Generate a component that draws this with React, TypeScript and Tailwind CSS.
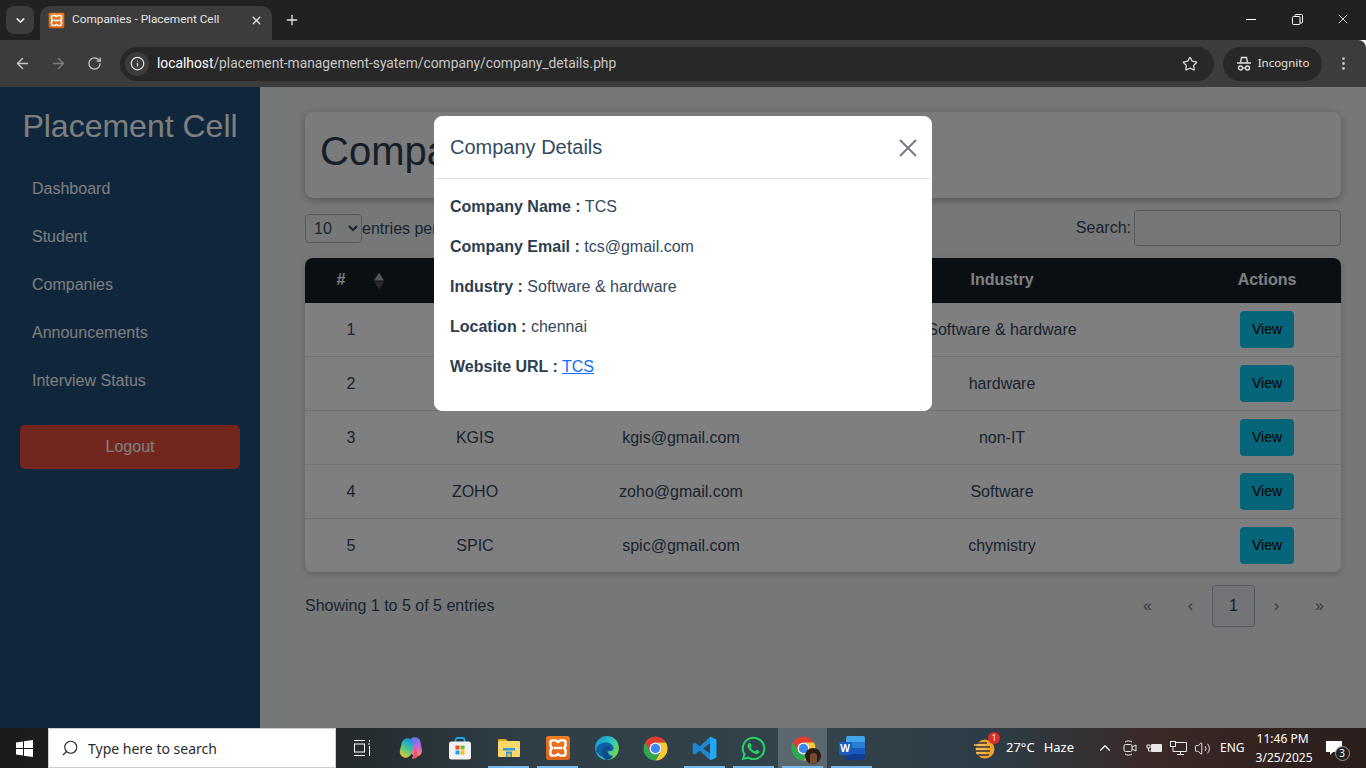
import { ArrowLeft, ArrowRight, ChevronDown, ChevronUp, EllipsisVertical, Info, Plus, RotateCw, Search, Star, Volume2, X } from 'lucide-react'
import { FaWhatsapp } from 'react-icons/fa'

const navItems = ['Dashboard', 'Student', 'Companies', 'Announcements', 'Interview Status']

// name and email of the first two rows sit behind the modal
const companies = [
  { id: 1, name: '', email: '', industry: 'Software & hardware' },
  { id: 2, name: '', email: '', industry: 'hardware' },
  { id: 3, name: 'KGIS', email: 'kgis@gmail.com', industry: 'non-IT' },
  { id: 4, name: 'ZOHO', email: 'zoho@gmail.com', industry: 'Software' },
  { id: 5, name: 'SPIC', email: 'spic@gmail.com', industry: 'chymistry' },
]

const details = [
  { label: 'Company Name :', value: 'TCS' },
  { label: 'Company Email :', value: 'tcs@gmail.com' },
  { label: 'Industry :', value: 'Software & hardware' },
  { label: 'Location :', value: 'chennai' },
]

function XamppLogo({ size, id }: { size: number; id: string }) {
  return (
    <svg width={size} height={size} viewBox="0 0 24 24">
      <defs>
        <linearGradient id={id} x1="0" y1="0" x2="0" y2="1">
          <stop offset="0" stopColor="#ee7d22" />
          <stop offset="1" stopColor="#d9651a" />
        </linearGradient>
      </defs>
      <rect x="1" y="1" width="22" height="22" rx="2.500" fill={`url(#${id})`} />
      <path d="M7 5h3l2 1.500L14 5h3a2 2 0 0 1 2 2v3l-1.500 2 1.500 2v3a2 2 0 0 1-2 2h-3l-2-1.500L10 19H7a2 2 0 0 1-2-2v-3l1.500-2L5 10V7a2 2 0 0 1 2-2Z" fill="none" stroke="#fff" strokeWidth="2.200" />
      <path d="M8 12h8" stroke="#fff" strokeWidth="2.200" />
    </svg>
  )
}

function ChromeLogo() {
  return (
    <svg width="29" height="29" viewBox="0 0 24 24">
      <path d="M3.340 7A10 10 0 0 1 20.660 7L12 7A5 5 0 0 0 7.670 14.500Z" fill="#e33b2e" />
      <path d="M20.660 7A10 10 0 0 1 12 22L16.330 14.500A5 5 0 0 0 12 7Z" fill="#fcc934" />
      <path d="M12 22A10 10 0 0 1 3.340 7L7.670 14.500A5 5 0 0 0 16.330 14.500Z" fill="#2fa84f" />
      <circle cx="12" cy="12" r="5" fill="#fff" />
      <circle cx="12" cy="12" r="3.900" fill="#4285f4" />
    </svg>
  )
}

function EdgeLogo() {
  return (
    <svg width="26" height="26" viewBox="0 0 24 24">
      <defs>
        <linearGradient id="edgeTop" x1="0" y1="0" x2="1" y2="0.6">
          <stop offset="0" stopColor="#1590d8" />
          <stop offset="0.6" stopColor="#2cc3c0" />
          <stop offset="1" stopColor="#6fd84f" />
        </linearGradient>
      </defs>
      <circle cx="12" cy="12" r="11" fill="url(#edgeTop)" />
      <path d="M2 15C2 9 7 7 11 7c4 0 7 2.500 7 5.500 0 1.500-1.500 2.500-4 2.500-1 0-1.500-.5-1.500-.5 0 3 3 5 6 4.500A11 11 0 0 1 2 15Z" fill="#0f5fa8" />
      <path d="M7.500 15.500c0-3 2-5 5-5 2 0 3 1 3 2 0 1-1 1.500-3 1.500-.5 3 1.500 6 5 6A11 11 0 0 1 12 23c-3 0-4.500-4-4.500-7.500Z" fill="#114a8b" />
    </svg>
  )
}

function VsCodeLogo() {
  return (
    <svg width="27" height="27" viewBox="0 0 24 24">
      <path d="M17 1.500 22.500 4V20L17 22.500 7.800 14 3.500 17.300 1.500 16.200V7.800L3.500 6.700 7.800 10ZM17 7.300 10.800 12 17 16.700Z" fill="#1f86d0" fillRule="evenodd" />
      <path d="M17 1.500 22.500 4V20L17 22.500Z" fill="#23a9f2" />
    </svg>
  )
}

function CopilotLogo() {
  return (
    <svg width="26" height="26" viewBox="0 0 24 24">
      <defs>
        <linearGradient id="copA" x1="0.5" y1="0" x2="0.3" y2="1">
          <stop offset="0" stopColor="#1f8fe8" />
          <stop offset="0.5" stopColor="#3ec98a" />
          <stop offset="1" stopColor="#f5c72d" />
        </linearGradient>
        <linearGradient id="copB" x1="0.5" y1="0" x2="0.5" y2="1">
          <stop offset="0" stopColor="#5a7cf0" />
          <stop offset="0.5" stopColor="#c565dc" />
          <stop offset="1" stopColor="#f98a5a" />
        </linearGradient>
      </defs>
      <rect x="11" y="2" width="10.500" height="18" rx="5.200" transform="rotate(-10 16 11)" fill="url(#copB)" />
      <rect x="2.500" y="3" width="11" height="18" rx="5.400" transform="rotate(14 8 12)" fill="url(#copA)" />
      <path d="M14.500 9c1.500 3 1 8-1.500 12-1 1.500 3 1 4.500-.5 1.500-2 .5-6-3-11.500Z" fill="#f0556f" />
    </svg>
  )
}

function StoreLogo() {
  return (
    <svg width="24" height="24" viewBox="0 0 24 24">
      <path d="M7.500 6V4a2 2 0 0 1 2-2h5a2 2 0 0 1 2 2v2" fill="none" stroke="#1fa3e8" strokeWidth="1.800" />
      <rect x="1" y="5.500" width="22" height="18" rx="2.500" fill="#f2f2f2" />
      <rect x="7.500" y="9.500" width="4" height="4" fill="#e8502a" />
      <rect x="12.500" y="9.500" width="4" height="4" fill="#7cb82c" />
      <rect x="7.500" y="14.500" width="4" height="4" fill="#1fa3e8" />
      <rect x="12.500" y="14.500" width="4" height="4" fill="#fbbb1b" />
    </svg>
  )
}

function FolderLogo() {
  return (
    <svg width="24" height="24" viewBox="0 0 24 24">
      <path d="M1 3h8l2 2.500H1Z" fill="#dba21e" />
      <rect x="1" y="5" width="22" height="16" rx="1" fill="#fcd86b" />
      <path d="M9 21v-5.500h6V21h-2v-3h-2v3Z" fill="#2e9be0" />
      <rect x="6" y="12" width="12" height="2.500" fill="#2e9be0" />
      <rect x="10.500" y="17.500" width="3" height="3.500" fill="#f4b63c" />
    </svg>
  )
}

function WordLogo() {
  return (
    <div className="relative h-[24px] w-[26px]">
      <div className="absolute right-0 top-0 h-[24px] w-[19px] overflow-hidden rounded-[2px]">
        <div className="h-[6px] bg-[#41a5ee]" />
        <div className="h-[6px] bg-[#2b7cd3]" />
        <div className="h-[6px] bg-[#185abd]" />
        <div className="h-[6px] bg-[#103f91]" />
      </div>
      <span className="absolute left-0 top-[6px] flex h-[13px] w-[13px] items-center justify-center rounded-[1px] bg-[#185abd] text-[10px] font-bold text-white">W</span>
    </div>
  )
}

function IncognitoIcon() {
  return (
    <svg width="16" height="16" viewBox="0 0 16 16" fill="none" stroke="#e3e3e3" strokeWidth="1.300">
      <path d="M4.500 6.500 5.500 1.500h5l1 5" />
      <path d="M1 7h14" strokeWidth="1.500" />
      <circle cx="4.500" cy="12" r="2" />
      <circle cx="11.500" cy="12" r="2" />
      <path d="M6.500 12h3" />
    </svg>
  )
}

function WeatherIcon() {
  return (
    <div className="relative h-[26px] w-[26px]">
      <svg width="26" height="26" viewBox="0 0 26 26">
        <circle cx="13" cy="14" r="9.500" fill="#f4a12c" />
        <path d="M1 8h14M3 12h15M1 16h17M6 20h11" stroke="#2e3b40" strokeWidth="1.500" />
        <path d="M2 10h12M4 14h11M4 18h10" stroke="#f6c05b" strokeWidth="1.500" />
      </svg>
      <span className="absolute right-[-2px] top-[-3px] flex h-[12px] w-[12px] items-center justify-center rounded-full bg-[#d92b2b] text-[8px] text-white">1</span>
    </div>
  )
}

function SortCarets() {
  return (
    <span className="absolute left-[69px] top-1/2 flex -translate-y-1/2 flex-col gap-[1px]">
      <span className="h-0 w-0 border-x-[5px] border-b-[8px] border-x-transparent border-b-[#a8acb0]" />
      <span className="h-0 w-0 border-x-[5px] border-t-[8px] border-x-transparent border-t-[#4c5054]" />
    </span>
  )
}

function TaskButton({ children, running, active }: { children: React.ReactNode; running?: boolean; active?: boolean }) {
  return (
    <div className={`relative flex h-full w-[49px] shrink-0 items-center justify-center ${active ? 'bg-white/20' : ''}`}>
      {children}
      {running && <span className="absolute bottom-0 left-[4px] right-[4px] h-[2px] bg-[#76b9ed]" />}
    </div>
  )
}

function BrowserChrome() {
  return (
    <header className="shrink-0 font-['Noto_Sans',sans-serif]">
      <div className="flex h-[40px] items-end bg-[#202221] pl-[6px]">
        <button className="mb-[6px] flex h-[28px] w-[28px] items-center justify-center rounded-lg bg-[#3c3c3c] text-[#e3e3e3]">
          <ChevronDown size={13} strokeWidth={3} />
        </button>
        <div className="ml-[6px] flex h-[34px] w-[232px] items-center rounded-t-[10px] bg-[#3c3c3c] pb-[6px] pl-[8px] pr-[9px]">
          <XamppLogo size={17} id="xamppTab" />
          <span className="ml-[7px] flex-1 font-['Roboto',sans-serif] text-[11.800px] text-[#e3e3e3]">Companies - Placement Cell</span>
          <X size={13} strokeWidth={2.5} className="text-[#e3e3e3]" />
        </div>
        <Plus size={16} strokeWidth={2} className="mb-[12px] ml-[12px] text-[#e3e3e3]" />
        <div className="mb-[13px] ml-auto flex items-center text-white">
          <span className="flex w-[46px] justify-center"><span className="h-px w-[10px] bg-white" /></span>
          <span className="flex w-[46px] justify-center">
            <svg width="11" height="11" viewBox="0 0 11 11" fill="none" stroke="#fff"><rect x="0.500" y="2.500" width="7.500" height="8" rx="1" /><path d="M3 2.500V1.500a1 1 0 0 1 1-1h5.500a1 1 0 0 1 1 1V8a1 1 0 0 1-1 1H8" /></svg>
          </span>
          <span className="flex w-[46px] justify-center"><X size={16} strokeWidth={1.2} /></span>
        </div>
      </div>
      <div className="flex h-[47px] items-center rounded-tr-lg bg-[#3c3c3c] pl-[14px] pr-[12px]">
        <ArrowLeft size={17} className="text-[#c7c7c7]" />
        <ArrowRight size={17} className="ml-[19px] text-[#7d7d7d]" />
        <RotateCw size={15} className="ml-[20px] text-[#c7c7c7]" />
        <div className="ml-[18px] flex h-[34px] w-[1094px] items-center rounded-full bg-[#282828] pl-[5px] pr-[16px]">
          <span className="flex h-[24px] w-[24px] items-center justify-center rounded-full bg-[#3c3c3c]">
            <Info size={15} className="text-[#e3e3e3]" />
          </span>
          <span className="ml-[8px] flex-1 font-['Roboto',sans-serif] text-[13.800px] text-[#c7c7c7]"><span className="text-white">localhost</span>/placement-management-syatem/company/company_details.php</span>
          <Star size={16} className="text-[#d0d0d0]" />
        </div>
        <div className="ml-[9px] flex h-[34px] w-[99px] items-center justify-center gap-[6px] rounded-full bg-[#282828]">
          <IncognitoIcon />
          <span className="pb-[2px] text-[11.500px] text-[#e3e3e3]">Incognito</span>
        </div>
        <EllipsisVertical size={17} className="ml-[13px] text-[#c7c7c7]" />
      </div>
    </header>
  )
}

function Sidebar() {
  return (
    <aside className="flex w-[260px] shrink-0 flex-col bg-[#1e4c78] px-[20px] pt-[20px]">
      <h1 className="mb-[20px] whitespace-nowrap text-center text-[32px] leading-[38px] text-white">Placement Cell</h1>
      <nav className="flex flex-col">
        {navItems.map((item) => (
          <a key={item} className="flex h-[48px] items-center pl-[12px] text-[16px] text-[#fafafa]">{item}</a>
        ))}
      </nav>
      <button className="mt-[20px] h-[44px] w-[220px] rounded-[5px] bg-[#e74c3c] text-[16px] text-white">Logout</button>
    </aside>
  )
}

function CompanyTable() {
  return (
    <div className="overflow-hidden rounded-lg shadow-[0_2px_6px_rgba(0,0,0,0.2)]">
      <table className="w-[1036px] table-fixed border-separate border-spacing-0 text-center text-[16px]">
        <thead>
          <tr className="h-[45px] bg-[#141e28] font-bold text-white">
            <th className="relative w-[92px] pb-[2px] pr-[20px]">#<SortCarets /></th>
            <th className="w-[156px]" />
            <th className="w-[256px]" />
            <th className="w-[386px] pb-[2px]">Industry</th>
            <th className="w-[146px] pb-[2px] pr-[2px]">Actions</th>
          </tr>
        </thead>
        <tbody className="bg-white text-[#34495e]">
          {companies.map((company) => (
            <tr key={company.id} className="h-[54px] last:h-[53px] [&>td]:border-b [&>td]:border-[#dee2e6] last:[&>td]:border-b-0">
              <td>{company.id}</td>
              <td>{company.name}</td>
              <td>{company.email}</td>
              <td>{company.industry}</td>
              <td className="pr-[2px]">
                <button className="h-[37px] w-[54px] rounded-[4px] bg-[#0dcaf0] text-[14px] text-black">View</button>
              </td>
            </tr>
          ))}
        </tbody>
      </table>
    </div>
  )
}

function Pagination() {
  return (
    <div className="flex items-center text-[#6c757d]">
      <span className="w-[43px] text-center text-[16px]">«</span>
      <span className="w-[43px] text-center text-[16px]">‹</span>
      <span className="flex h-[42px] w-[43px] items-center justify-center rounded-[3px] border border-[#adb5bd] bg-[#e6e9ee] text-[16px] text-[#2c3e50]">1</span>
      <span className="w-[43px] text-center text-[16px]">›</span>
      <span className="w-[43px] text-center text-[16px]">»</span>
    </div>
  )
}

function CompanyModal() {
  return (
    <div className="absolute left-[434px] top-[29px] w-[498px] rounded-lg border border-white bg-white text-[16px] text-[#34495e]">
      <div className="flex h-[62px] items-center justify-between border-b border-[#dee2e6] pb-[2px] pl-[15px] pr-[8px]">
        <h2 className="text-[20px]">Company Details</h2>
        <X size={30} strokeWidth={1.5} className="mt-[2px] text-[#777a7c]" />
      </div>
      <div className="px-[15px] pt-[16px] pb-[15px]">
        {details.map((row) => (
          <p key={row.label} className="mb-[16px] leading-[24px]">
            <strong className="text-[#2c3e50]">{row.label}</strong> {row.value}
          </p>
        ))}
        <p className="mb-[16px] leading-[24px]">
          <strong className="text-[#2c3e50]">Website URL :</strong> <a className="text-[#0d6efd] underline">TCS</a>
        </p>
      </div>
    </div>
  )
}

function Taskbar() {
  return (
    <footer className="flex h-[40px] shrink-0 items-center bg-[linear-gradient(90deg,#1c1b1a_0%,#1f2224_20%,#2f3e46_38%,#33434b_60%,#2d3d47_72%,#3a2a28_84%,#2a1d1a_100%)] font-['Noto_Sans',sans-serif] text-white">
      <div className="flex h-full w-[48px] items-center justify-center">
        <svg width="17" height="17" viewBox="0 0 17 17" fill="#fff">
          <path d="M0 2.400 7 1.400V8H0ZM8 1.300 17 0V8H8ZM0 9H7V15.600L0 14.600ZM8 9H17V17L8 15.700Z" />
        </svg>
      </div>
      <div className="flex h-full w-[288px] items-center border border-[#cfcfcf] bg-white pl-[12px] text-[#2b2b2b]">
        <Search size={18} strokeWidth={1.5} className="-scale-x-100" />
        <span className="ml-[9px] text-[14px]">Type here to search</span>
      </div>
      <div className="ml-[1px] flex h-full items-center">
        <TaskButton>
          <svg width="16" height="16" viewBox="0 0 16 16" fill="none" stroke="#fff"><path d="M0 .5h11M0 15.500h11M15.500 0v2M15.500 6v10" /><rect x=".5" y="4" width="10" height="8" /><path d="M14 4h3" /></svg>
        </TaskButton>
        <TaskButton><CopilotLogo /></TaskButton>
        <TaskButton><StoreLogo /></TaskButton>
        <TaskButton running><FolderLogo /></TaskButton>
        <TaskButton running><XamppLogo size={26} id="xamppTask" /></TaskButton>
        <TaskButton><EdgeLogo /></TaskButton>
        <TaskButton><ChromeLogo /></TaskButton>
        <TaskButton running><VsCodeLogo /></TaskButton>
        <TaskButton running><FaWhatsapp size={27} className="text-[#25d366]" /></TaskButton>
        <TaskButton running active>
          <div className="relative ml-[2px]">
            <ChromeLogo />
            <span className="absolute bottom-[-1px] right-[-3px] flex h-[16px] w-[16px] items-end justify-center overflow-hidden rounded-full bg-[#2a1c14]">
              <span className="h-[11px] w-[7px] rounded-t-full bg-[#7a4a2c]" />
            </span>
          </div>
        </TaskButton>
        <TaskButton running><WordLogo /></TaskButton>
      </div>
      <div className="ml-[96px] flex h-full items-center text-[13px]">
        <WeatherIcon />
        <span className="ml-[8px]">27°C</span>
        <span className="ml-[9px]">Haze</span>
        <ChevronUp size={18} strokeWidth={1.5} className="ml-[22px]" />
        <svg className="ml-[9px]" width="14" height="16" viewBox="0 0 14 16" fill="none" stroke="#e8e8e8"><rect x="1" y="4.500" width="8" height="7" rx="1.500" /><path d="M9 7l4-2v6l-4-2M2 2c2-1.500 5-1.500 7 0M2 14c2 1.500 5 1.500 7 0" /></svg>
        <svg className="ml-[9px]" width="17" height="12" viewBox="0 0 17 12" fill="#e8e8e8"><rect x="5" y="2" width="11" height="8" rx="1" /><path d="M1 3v3h3V3ZM2.500 6v3H5" stroke="#e8e8e8" fill="none" /></svg>
        <svg className="ml-[7px]" width="17" height="16" viewBox="0 0 17 16" fill="none" stroke="#e8e8e8"><rect x=".5" y="1.500" width="5" height="5" /><path d="M5.500 2.500h11v9h-11M3 6.500v5h3M10.500 11.500v3M7 14.500h7" /></svg>
        <Volume2 size={17} strokeWidth={1.2} className="ml-[7px]" />
        <span className="ml-[9px] text-[12px]">ENG</span>
        <div className="ml-[11px] w-[54px] text-center text-[12px] leading-[19px]">
          <div>11:46 PM</div>
          <div>3/25/2025</div>
        </div>
        <div className="relative ml-[16px]">
          <svg width="16" height="15" viewBox="0 0 16 15" fill="#fff"><path d="M0 0h16v11H7l-3 3v-3H0Z" /></svg>
          <span className="absolute bottom-[-5px] right-[-8px] flex h-[15px] w-[15px] items-center justify-center rounded-full border border-[#999] bg-[#222] text-[10px]">3</span>
        </div>
      </div>
    </footer>
  )
}

export default function App() {
  return (
    <div className="flex h-[768px] w-[1366px] flex-col overflow-hidden font-['Liberation_Sans',Arial,sans-serif]">
      <BrowserChrome />
      <main className="relative flex min-h-0 flex-1">
        <Sidebar />
        <section className="w-[1106px] bg-[#ecf0f1] pl-[45px] pr-[25px] pt-[25px] text-[#34495e]">
          <div className="mb-[12px] rounded-lg bg-[#f5f7f8] px-[15px] pb-[23px] pt-[15px] shadow-[0_2px_8px_rgba(0,0,0,0.3)]">
            <h2 className="text-[40px] leading-[48px] text-[#2c3e50]">Companies</h2>
          </div>
          <div className="mb-[12px] flex h-[36px] items-center justify-between text-[16px]">
            <label className="flex items-center pt-[1px]">
              <select className="h-[29px] w-[57px] rounded-[4px] border border-[#adb5bd] pl-[4px]">
                <option>10</option>
              </select>
              entries per page
            </label>
            <label className="flex items-center gap-[3px]">
              Search:
              <input className="h-[36px] w-[207px] rounded-[4px] border border-[#adb5bd]" />
            </label>
          </div>
          <CompanyTable />
          <div className="mt-[13px] flex items-center justify-between text-[16px]">
            <span>Showing 1 to 5 of 5 entries</span>
            <Pagination />
          </div>
        </section>
        <div className="absolute inset-0 bg-black/50" />
        <CompanyModal />
      </main>
      <Taskbar />
    </div>
  )
}
